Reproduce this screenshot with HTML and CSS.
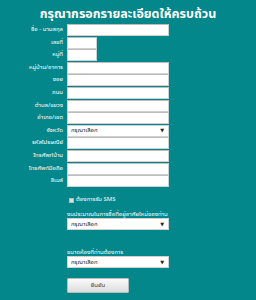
FILE: index.html
```html
<!DOCTYPE html>
<html lang="th">

<head>
  <meta charset="UTF-8">
  <meta name="viewport" content="width=device-width, initial-scale=1.0">
  <title>ลงทะเบียน</title>
  <link rel="stylesheet" href="styles.css">
</head>

<body>
  <h1 class="title">กรุณากรอกรายละเอียดให้ครบถ้วน</h1>

  <form class="form">
    <div class="fields">
      <label class="label">ชื่อ - นามสกุล</label>
      <input class="input" type="text">
      <label class="label">เลขที่</label>
      <input class="input short" type="text">
      <label class="label">หมู่ที่</label>
      <input class="input short" type="text">
      <label class="label">หมู่บ้าน/อาคาร</label>
      <input class="input" type="text">
      <label class="label">ซอย</label>
      <input class="input" type="text">
      <label class="label">ถนน</label>
      <input class="input" type="text">
      <label class="label">ตำบล/แขวง</label>
      <input class="input" type="text">
      <label class="label">อำเภอ/เขต</label>
      <input class="input" type="text">
      <label class="label">จังหวัด</label>
      <div class="select"><span>กรุณาเลือก</span><span class="arrow">▼</span></div>
      <label class="label">รหัสไปรษณีย์</label>
      <input class="input" type="text">
      <label class="label">โทรศัพท์บ้าน</label>
      <input class="input" type="text">
      <label class="label">โทรศัพท์มือถือ</label>
      <input class="input" type="text">
      <label class="label">อีเมล์</label>
      <input class="input" type="text">
    </div>

    <div class="extra">
      <label class="check"><span class="box"></span>ต้องการรับ SMS</label>

      <p class="caption">งบประมาณในการซื้อที่อยู่อาศัยใหม่ของท่าน</p>
      <div class="select"><span>กรุณาเลือก</span><span class="arrow">▼</span></div>

      <p class="caption spaced">ขนาดห้องที่ท่านต้องการ</p>
      <div class="select"><span>กรุณาเลือก</span><span class="arrow">▼</span></div>

      <button class="submit" type="button">ยืนยัน</button>
    </div>
  </form>
</body>

</html>
```

FILE: styles.css
```css
* {
  box-sizing: border-box;
}

:root {
  --background: #03878b;
  --border: #d0d0d0;
}

html {
  background-color: var(--background);
}

body {
  margin: 0;
  width: 256px;
  height: 300px;
  overflow: hidden;
  font-family: Tahoma, "Noto Sans Thai", "DejaVu Sans", sans-serif;
  color: #fff;
}

.title {
  margin: 0;
  padding-top: 5px;
  height: 24px;
  font-size: 12.5px;
  font-weight: bold;
  text-align: center;
}

.fields {
  display: grid;
  grid-template-columns: 63px 102px;
  column-gap: 4px;
  row-gap: 0.6px;
}

.label {
  font-size: 6px;
  line-height: 12px;
  text-align: right;
  white-space: nowrap;
}

.input {
  display: block;
  width: 102px;
  height: 12px;
  margin: 0;
  padding: 0;
  border: 1px solid var(--border);
  border-top-color: #bdbdbd;
  background: #fff;
}

.input.short {
  width: 30px;
}

.select {
  display: flex;
  justify-content: space-between;
  align-items: center;
  width: 102px;
  height: 12px;
  padding: 0 4px 0 3px;
  border: 1px solid var(--border);
  background: #fff;
  color: #222;
  font-size: 6px;
}

.arrow {
  font-size: 5px;
}

.extra {
  padding-left: 67px;
}

.check {
  display: flex;
  align-items: center;
  gap: 2px;
  margin-top: 9px;
  margin-left: 2px;
  font-size: 6px;
  line-height: 8px;
}

.box {
  width: 5px;
  height: 5px;
  background: #ddd;
  border: 1px solid #bbb;
}

.caption {
  margin: 7px 0 0;
  font-size: 6px;
  line-height: 7px;
  white-space: nowrap;
}

.caption.spaced {
  margin-top: 19px;
}

.submit {
  display: block;
  margin-top: 10px;
  width: 62px;
  height: 15px;
  padding: 0;
  border: 1px solid #bbb;
  border-radius: 1px;
  background: linear-gradient(#fbfbfb, #dcdcdc);
  color: #444;
  font-family: inherit;
  font-size: 6px;
}
```
